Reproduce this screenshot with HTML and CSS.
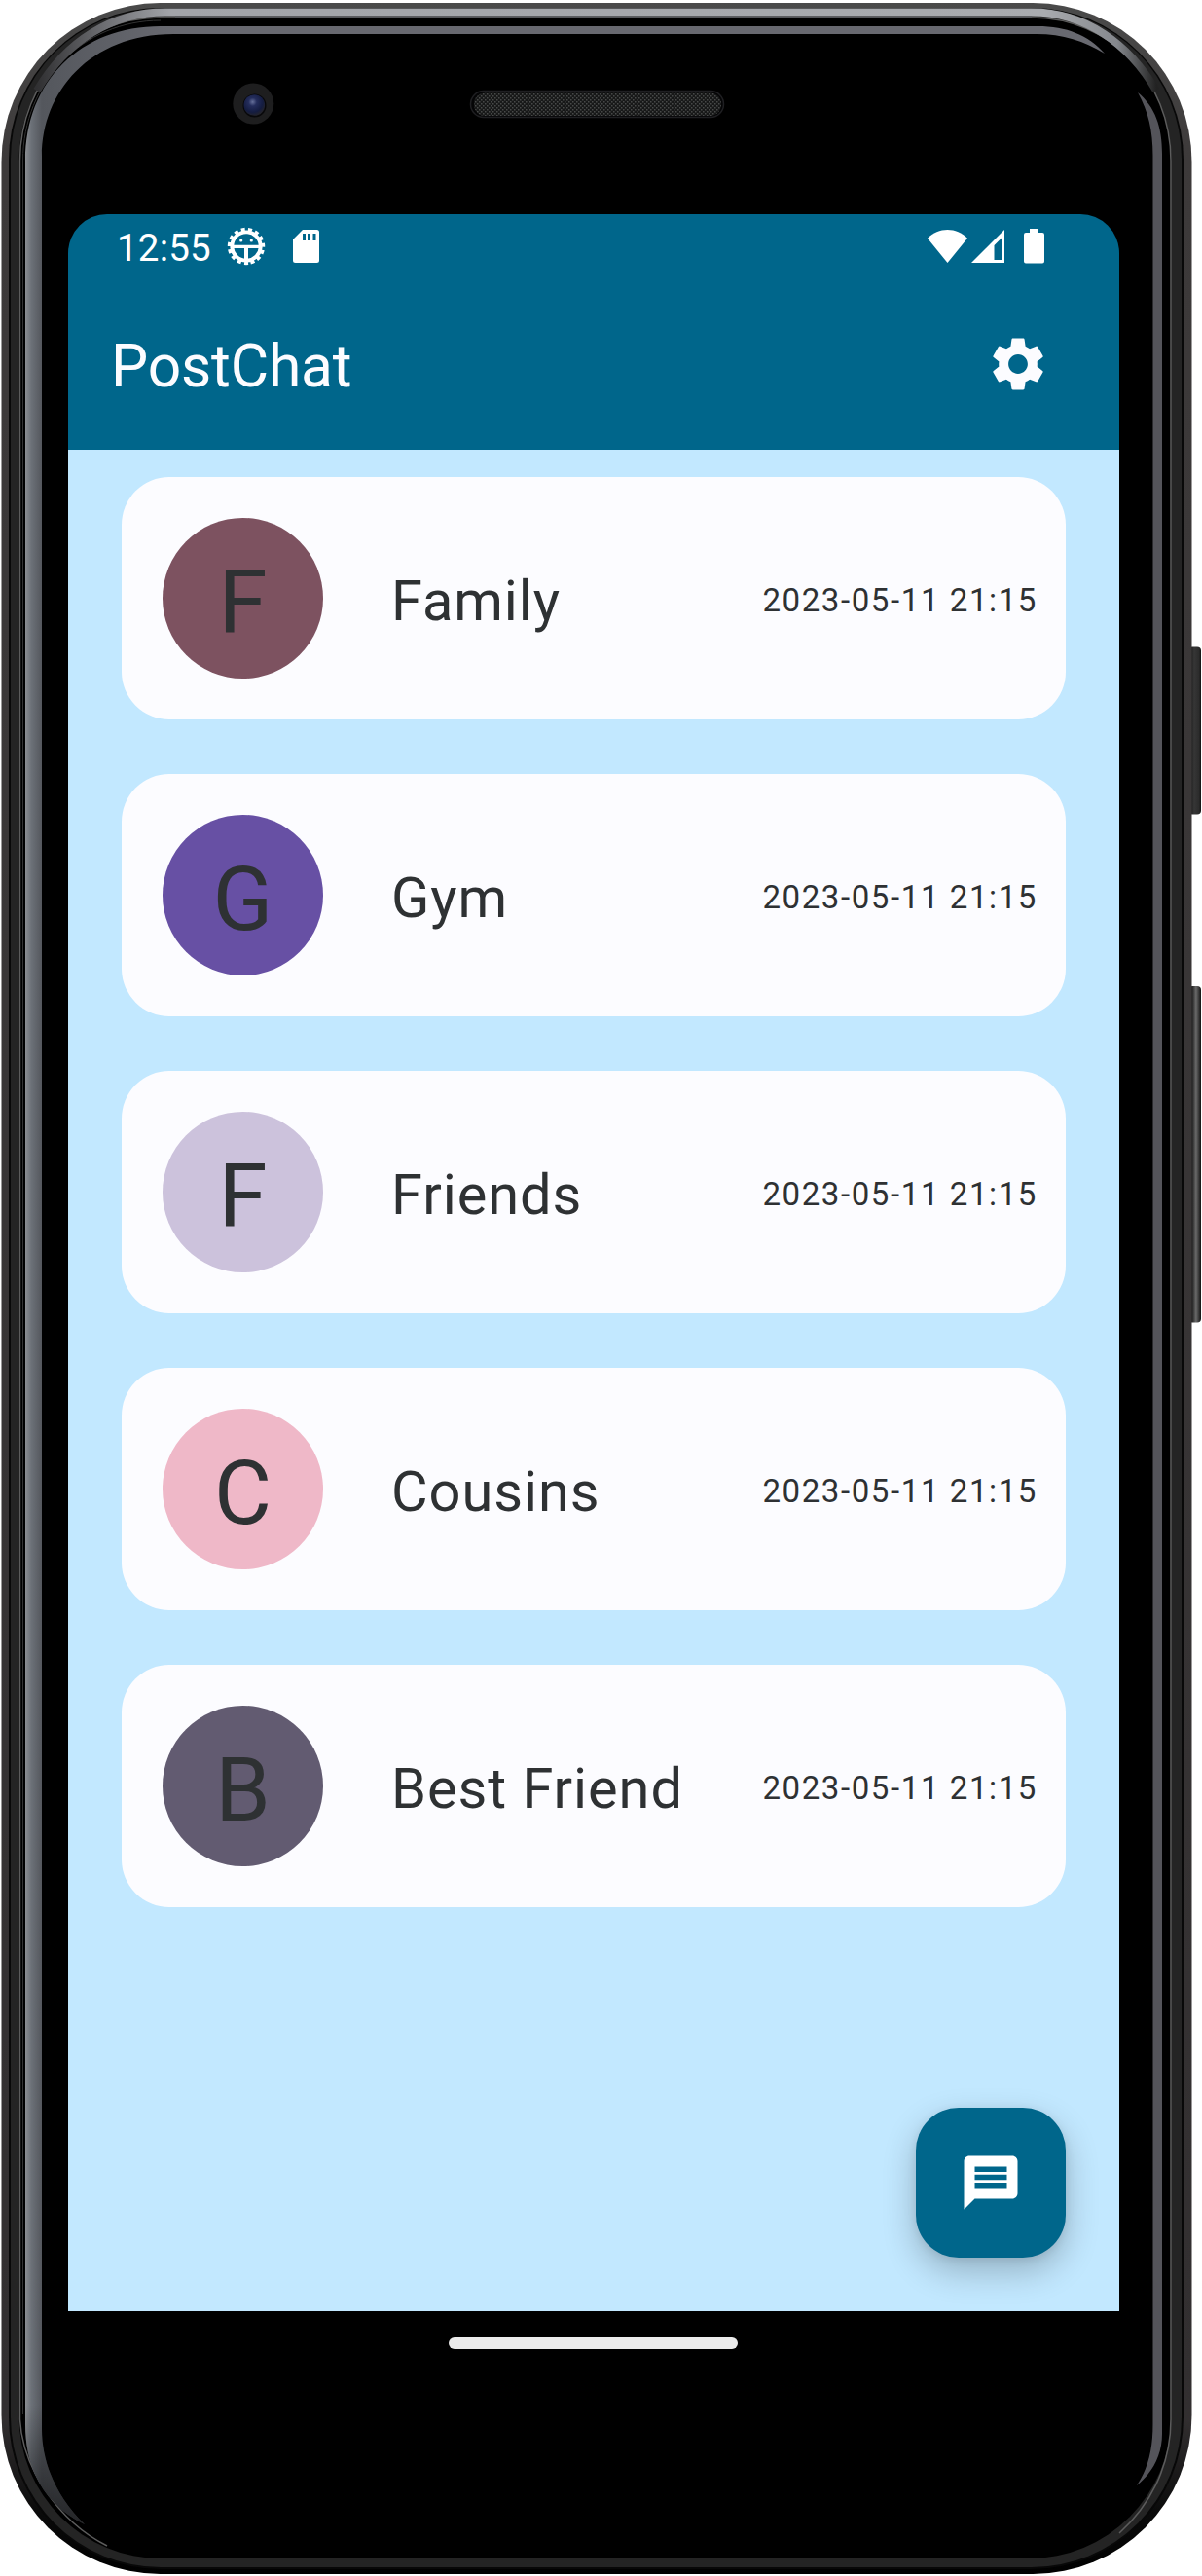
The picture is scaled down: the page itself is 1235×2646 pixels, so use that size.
FILE: index.html
```html
<!DOCTYPE html>
<html lang="en">
<head>
<meta charset="utf-8">
<title>PostChat</title>
<link rel="stylesheet" href="styles.css">
</head>
<body>
<div class="device">
  <svg class="frame" viewBox="0 0 1235 2646" aria-hidden="true">
    <defs>
      <linearGradient id="shell" x1="0" y1="0" x2="0" y2="1">
        <stop offset="0" stop-color="#4a4a4a"/><stop offset=".06" stop-color="#3d3a3a"/><stop offset=".94" stop-color="#322f30"/><stop offset=".975" stop-color="#0b0b0b"/><stop offset="1" stop-color="#000"/>
      </linearGradient>
      <linearGradient id="glassLeft" gradientUnits="userSpaceOnUse" x1="26" y1="0" x2="180" y2="0">
        <stop offset="0" stop-color="#8b8e92"/><stop offset=".04" stop-color="#6c7178"/><stop offset=".11" stop-color="#54575d"/><stop offset="1" stop-color="#686970"/>
      </linearGradient>
      <linearGradient id="glassFade" gradientUnits="userSpaceOnUse" x1="0" y1="2470" x2="0" y2="2593">
        <stop offset="0" stop-color="#000" stop-opacity="0"/><stop offset="1" stop-color="#000" stop-opacity=".6"/>
      </linearGradient>
      <linearGradient id="shine" gradientUnits="userSpaceOnUse" x1="38" y1="0" x2="1188" y2="0">
        <stop offset="0" stop-color="#303032"/><stop offset=".06" stop-color="#6d6e72"/><stop offset=".12" stop-color="#a2a4a9"/><stop offset=".9" stop-color="#a9abaf"/><stop offset=".965" stop-color="#85888d"/><stop offset="1" stop-color="#222"/>
      </linearGradient>
      <linearGradient id="keyA"><stop offset="0" stop-color="#080808"/><stop offset=".45" stop-color="#363636"/><stop offset=".85" stop-color="#2b2b2b"/><stop offset="1" stop-color="#111"/></linearGradient>
      <linearGradient id="keyB"><stop offset="0" stop-color="#111"/><stop offset=".3" stop-color="#222"/><stop offset=".6" stop-color="#6a6a6a"/><stop offset=".85" stop-color="#333"/><stop offset="1" stop-color="#111"/></linearGradient>
      <radialGradient id="lens" cx=".42" cy=".35" r=".65">
        <stop offset="0" stop-color="#66709a"/><stop offset=".3" stop-color="#242d5c"/><stop offset=".75" stop-color="#141c40"/><stop offset="1" stop-color="#23232b"/>
      </radialGradient>
      <pattern id="mesh" width="4" height="4" patternUnits="userSpaceOnUse">
        <rect width="4" height="4" fill="#171818"/><rect width="1.500" height="1.500" fill="#484a49"/><rect x="2" y="2" width="1.500" height="1.500" fill="#484a49"/>
      </pattern>
    </defs>
    <rect x="1221" y="657.500" width="0" height="0"/>
    <rect x="1221" y="664.500" width="13" height="172" rx="4" fill="url(#keyA)"/>
    <rect x="1221" y="1013" width="13" height="345.500" rx="4" fill="url(#keyB)"/>
    <rect x="1.500" y="3" width="1223" height="2641" rx="163" fill="url(#shell)"/>
    <rect x="9" y="8" width="1207" height="2631" rx="156" fill="#080808"/>
    <rect x="11" y="9" width="1203" height="2628" rx="154" fill="#242424"/>
    <rect x="19.500" y="17.500" width="1184" height="2610.500" rx="146" fill="#000"/>
    <path d="M20.500 2485V165C20.500 82 84 18 165 18H1060C1140 18 1203 82 1203 165V2485C1203 2535 1180 2575 1150 2602M20.500 2485C23 2535 60 2590 110 2615" fill="none" stroke="#5c5c5c" stroke-width="1.500"/>
    <path d="M23.500 2480V165C23.500 84 85 21 165 21" fill="none" stroke="#333" stroke-width="1"/>
    <path d="M38 93C68 42 115 12.500 170 12.500H1060C1115 12.500 1160 45 1188 93" fill="none" stroke="url(#shine)" stroke-width="8"/>
    <path d="M180 17.500H1060" stroke="#55565a" stroke-width="2"/>
    <path d="M1135 55C1118 36 1096 27 1066 27H165C83 27 26 83 26 165V2490C26 2542 50 2575 87 2593C58 2565 43 2530 43 2495V160C43 95 92 35 178 35H1065C1092 35 1114 42 1135 55Z" fill="url(#glassLeft)"/>
    <path d="M26 2470V2490C26 2542 50 2575 87 2593C58 2565 43 2530 43 2495V2470Z" fill="url(#glassFade)"/>
    <path d="M1169 95C1187 110 1194 130 1194 158V2500C1194 2522 1184 2540 1168 2553C1180 2535 1184.500 2515 1184.500 2490V160C1184.500 134 1180 115 1169 95Z" fill="#54545a"/>
    <circle cx="260.300" cy="106.500" r="21" fill="#1e1e1f"/>
    <circle cx="261.500" cy="108.500" r="12" fill="#08080a"/>
    <circle cx="261.300" cy="108" r="10.800" fill="url(#lens)"/>
    <rect x="483.500" y="93.500" width="260" height="27" rx="13.500" fill="#050506" stroke="#1f1f22" stroke-width="1.500"/>
    <rect x="487" y="95.500" width="254" height="23.500" rx="11.500" fill="url(#mesh)"/>
  </svg>

  <main class="screen">
    <header class="top">
      <div class="status">
        <span class="clock">12:55</span>
        <svg class="i-debug" viewBox="-20 -20 40 40">
          <circle r="14.700" fill="none" stroke="#fff" stroke-width="3.800"/>
          <circle r="17.200" fill="none" stroke="#fff" stroke-width="4" stroke-dasharray="4 3.205" transform="rotate(83.300)"/>
          <path d="M-14-1.200H14V2H2V15H-2V2H-14Z" fill="#fff"/>
          <circle cx="-5.300" cy="-6" r="1.600" fill="#fff"/><circle cx="5.300" cy="-6" r="1.600" fill="#fff"/>
        </svg>
        <svg class="i-sd" viewBox="0 0 27 34"><path fill="#fff" fill-rule="evenodd" d="M10 0H24.500Q27 0 27 2.500V31.500Q27 34 24.500 34H2.500Q0 34 0 31.500V10ZM10 4V11H13V4ZM15 4V11H18V4ZM20.500 4V11H23.500V4Z"/></svg>
        <svg class="i-wifi" viewBox="0 0 41 34"><path fill="#fff" d="M20.500 34L0 8.800C5.500 3 13 0 20.500 0S35.500 3 41 8.800Z"/></svg>
        <svg class="i-signal" viewBox="0 0 34 34"><path fill="#fff" fill-rule="evenodd" d="M34 0V34H0ZM31 8.500L23.500 16V31H31Z"/></svg>
        <svg class="i-battery" viewBox="0 0 21 36"><path fill="#fff" d="M6 0H15V4H19Q21 4 21 6V33.500Q21 35.500 19 35.500H2Q0 35.500 0 33.500V6Q0 4 2 4H6Z"/></svg>
      </div>
      <div class="appbar">
        <h1 class="title">PostChat</h1>
        <svg class="i-settings" viewBox="0 0 24 24"><path fill="#fcfcff" d="M19.140 12.940c.04-.3.06-.61.06-.94 0-.32-.02-.64-.07-.94l2.030-1.580c.18-.14.23-.41.12-.61l-1.920-3.320c-.12-.22-.37-.29-.59-.22l-2.390.96c-.5-.38-1.030-.7-1.620-.94l-.36-2.540c-.04-.24-.24-.41-.48-.41h-3.840c-.24 0-.43.17-.47.41l-.36 2.540c-.59.24-1.130.57-1.620.94l-2.390-.96c-.22-.08-.47 0-.59.22L2.740 8.870c-.12.21-.08.47.12.61l2.030 1.580c-.05.3-.09.63-.09.94s.02.64.07.94l-2.030 1.580c-.18.14-.23.41-.12.61l1.920 3.320c.12.22.37.29.59.22l2.390-.96c.5.38 1.030.7 1.620.94l.36 2.540c.05.24.24.41.48.41h3.840c.24 0 .44-.17.47-.41l.36-2.540c.59-.24 1.130-.56 1.620-.94l2.390.96c.22.08.47 0 .59-.22l1.920-3.320c.12-.22.07-.47-.12-.61l-2.010-1.580zM12 15.600c-1.980 0-3.600-1.620-3.600-3.600s1.620-3.600 3.600-3.600 3.600 1.620 3.600 3.600-1.620 3.600-3.600 3.600z"/></svg>
      </div>
    </header>

    <section class="chats">
      <article class="card"><div class="avatar rose">F</div><div class="name">Family</div><time class="date">2023-05-11 21:15</time></article>
      <article class="card"><div class="avatar violet">G</div><div class="name">Gym</div><time class="date">2023-05-11 21:15</time></article>
      <article class="card"><div class="avatar lilac">F</div><div class="name">Friends</div><time class="date">2023-05-11 21:15</time></article>
      <article class="card"><div class="avatar pink">C</div><div class="name">Cousins</div><time class="date">2023-05-11 21:15</time></article>
      <article class="card"><div class="avatar slate">B</div><div class="name">Best Friend</div><time class="date">2023-05-11 21:15</time></article>
      <div class="fab">
        <svg class="i-message" viewBox="0 0 24 24"><path fill="#fff" d="M20 2H4c-1.100 0-1.990.9-1.990 2L2 22l4-4h14c1.100 0 2-.9 2-2V4c0-1.100-.9-2-2-2zm-2 12H6v-2h12v2zm0-3H6V9h12v2zm0-3H6V6h12v2z"/></svg>
      </div>
    </section>
    <footer class="nav"><div class="pill"></div></footer>
  </main>
</div>
</body>
</html>
```

FILE: styles.css
```css
* { box-sizing: border-box; }
body {
  margin: 0;
  background: #fff;
  font-family: Roboto, "Liberation Sans", sans-serif;
}
svg { display: block; flex: none; }
.device {
  position: relative;
  width: 1235px;
  height: 2646px;
  padding: 220px 85px 206px 70px;
  overflow: hidden;
}
.frame {
  position: absolute;
  inset: 0;
  width: 1235px;
  height: 2646px;
}
.screen {
  position: relative;
  display: flex;
  flex-direction: column;
  width: 1080px;
  height: 2220px;
}
.top {
  height: 242px;
  background: #00668b;
  border-radius: 40px 40px 0 0;
  color: #fcfcff;
}
.status {
  display: flex;
  align-items: center;
  height: 66px;
  padding: 0 77px 0 50px;
}
.clock {
  width: 113px;
  padding-top: 3px;
  font-size: 38.5px;
  line-height: 66px;
  letter-spacing: 0.2px;
  color: #fff;
}
.i-debug { width: 40px; height: 40px; }
.i-sd { width: 27px; height: 34px; margin-left: 28px; }
.i-wifi { width: 41px; height: 34px; margin-left: auto; }
.i-signal { width: 34px; height: 34px; margin-left: 4px; }
.i-battery { width: 21px; height: 36px; margin-left: 20px; }
.appbar {
  display: flex;
  align-items: center;
  justify-content: space-between;
  height: 176px;
  padding: 0 71px 0 44px;
}
.title {
  margin: 0;
  padding-top: 4px;
  font-size: 60.5px;
  font-weight: 400;
  line-height: 77px;
  letter-spacing: -0.15px;
}
.i-settings { width: 66px; height: 66px; }
.chats {
  position: relative;
  flex: 1;
  display: flex;
  flex-direction: column;
  gap: 56px;
  padding: 28px 55px;
  background: #c2e8ff;
  overflow: hidden;
}
.card {
  display: flex;
  align-items: center;
  height: 249px;
  padding: 0 29px 0 42px;
  border-radius: 49px;
  background: #fcfcff;
  color: #2e3133;
}
.avatar {
  display: flex;
  align-items: center;
  justify-content: center;
  width: 165px;
  height: 165px;
  margin-right: 70px;
  padding-top: 8px;
  border-radius: 50%;
  font-size: 90.75px;
}
.rose { background: #7d5260; }
.violet { background: #6750a4; }
.lilac { background: #ccc2dc; }
.pink { background: #efb8c8; }
.slate { background: #625b71; }
.name {
  flex: 1;
  padding-top: 4px;
  font-size: 57.75px;
  letter-spacing: 0.95px;
}
.date {
  padding-top: 4px;
  font-size: 33px;
  letter-spacing: 1.6px;
}
.fab {
  position: absolute;
  right: 55px;
  bottom: 55px;
  display: flex;
  align-items: center;
  justify-content: center;
  width: 154px;
  height: 154px;
  border-radius: 44px;
  background: #00668b;
  box-shadow: 0 14px 34px rgba(0, 0, 0, .24), 0 2px 10px rgba(0, 0, 0, .08);
}
.i-message { width: 66px; height: 66px; }
.nav {
  display: flex;
  justify-content: center;
  height: 66px;
  padding: 27px 1px 0 0;
  background: #000;
}
.pill {
  width: 297px;
  height: 12px;
  border-radius: 6px;
  background: #ebebeb;
}
```
